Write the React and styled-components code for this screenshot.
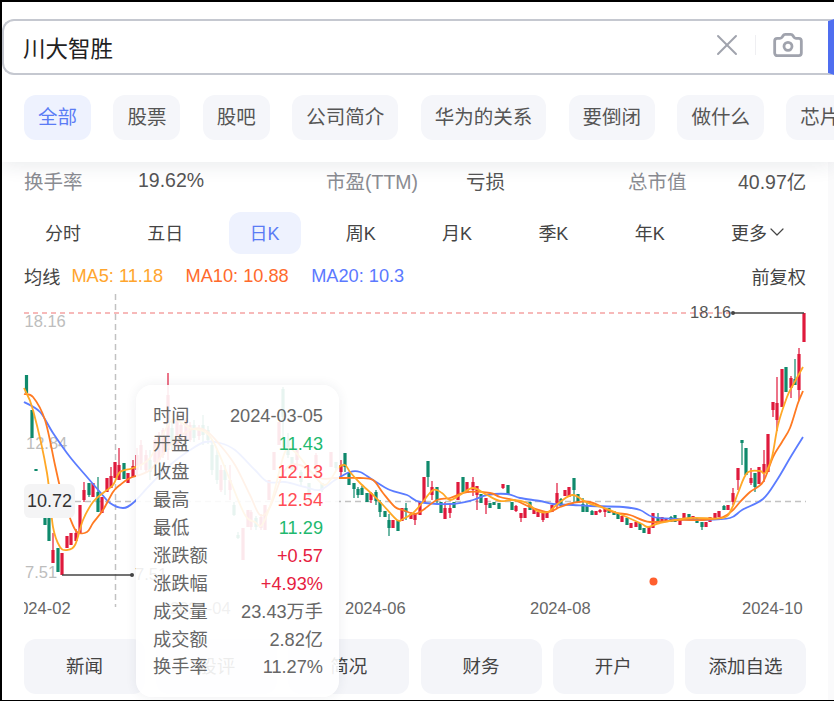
import React from 'react'
import styled, { createGlobalStyle } from 'styled-components'
import { X, Camera, ChevronDown } from 'lucide-react'

const GlobalStyle = createGlobalStyle`
  html, body {
    margin: 0;
    padding: 0;
    background: #fff;
  }
  body {
    font-family: "Liberation Sans", "Noto Sans CJK SC", sans-serif;
  }
  * {
    box-sizing: border-box;
  }
`

const Frame = styled.div`
  position: relative;
  width: 834px;
  height: 701px;
  overflow: hidden;
  background: #fafafb;
  border-top: 2px solid #000;
  border-left: 2px solid #000;
  border-bottom: 1px solid #000;
`

const Main = styled.div`
  width: 826px;
  height: 698px;
  background: #fff;
`

const Header = styled.header`
  position: relative;
  z-index: 2;
  width: 832px;
  height: 160px;
  padding-top: 17px;
  background: #fff;
  box-shadow: 0 4px 18px rgba(30, 40, 70, 0.09);
`

const SearchBar = styled.div`
  display: flex;
  align-items: center;
  width: 832px;
  height: 56px;
  padding-left: 19px;
  background: #fff;
  border: 2px solid #c5c8d0;
  border-right: 6px solid #4f6ef0;
  border-radius: 12px 0 0 12px;
`

const SearchText = styled.span`
  flex: 1;
  font-size: 22.5px;
  color: #222;
`

const SearchTools = styled.div`
  display: flex;
  align-items: center;
  padding-right: 24px;
  padding-bottom: 4px;
  color: #a0a3ad;
`

const Separator = styled.i`
  display: block;
  width: 1px;
  height: 20px;
  margin: 0 16px 0 10px;
  background: #efeff2;
`

const ChipRow = styled.div`
  display: flex;
  gap: 22.4px;
  margin-top: 20px;
  padding-left: 22px;
  overflow: hidden;
`

const Chip = styled.div`
  flex: none;
  height: 45px;
  padding: 0 14px;
  line-height: 45px;
  font-size: 19.5px;
  border-radius: 12px;
  color: ${props => (props.$active ? '#5b7cf5' : '#555')};
  background: ${props => (props.$active ? '#eef2fe' : '#f5f6fa')};
`

const Stats = styled.div`
  display: grid;
  grid-template-columns: 114px 188px 140px 162px 110px 68px;
  align-items: center;
  height: 37px;
  padding-left: 22px;
  font-size: 19.5px;
  white-space: nowrap;
`

const StatLabel = styled.span`
  color: #8a8c92;
`

const StatValue = styled.span`
  color: #555;
`

const Periods = styled.div`
  display: flex;
  justify-content: space-between;
  width: 781px;
  margin: 13px 0 0 22px;
`

const Period = styled.div`
  display: flex;
  align-items: center;
  height: 42px;
  padding: 0 21px 2px;
  font-size: 18px;
  border-radius: 12px;
  color: ${props => (props.$active ? '#5b7cf5' : '#444')};
  background: ${props => (props.$active ? '#eef2fe' : 'transparent')};
`

const MoreArrow = styled(ChevronDown)`
  margin: 0 -5px 0 -2px;
`

const MaRow = styled.div`
  display: flex;
  align-items: center;
  height: 36px;
  margin-top: 4px;
  padding-left: 22px;
  width: 804px;
  font-size: 18.2px;
  color: #444;
  white-space: nowrap;
`

const MaValue = styled.span`
  margin-left: ${props => props.$gap}px;
  color: ${props => props.$color};
`

const MaRight = styled.span`
  margin-left: auto;
`

const ChartWrap = styled.div`
  position: relative;
  height: 345px;
`

const ChartSvg = styled.svg`
  display: block;
  width: 826px;
  height: 345px;
  font-family: "Liberation Sans", "Noto Sans CJK SC", sans-serif;
  font-size: 16.5px;
`

const PriceTag = styled.div`
  position: absolute;
  left: 22px;
  top: 190px;
  width: 51px;
  height: 34px;
  line-height: 34px;
  text-align: center;
  font-size: 18px;
  color: #333;
  background: #f4f4f5;
  border-radius: 6px;
`

const Actions = styled.div`
  display: grid;
  grid-template-columns: repeat(6, 121px);
  gap: 11.2px;
  padding-left: 22px;
`

const Action = styled.div`
  height: 55px;
  line-height: 55px;
  text-align: center;
  font-size: 18.5px;
  color: #444;
  background: #f4f5f9;
  border-radius: 12px;
`

const Tooltip = styled.div`
  position: absolute;
  z-index: 3;
  left: 134px;
  top: 383px;
  width: 203px;
  height: 312px;
  padding: 17px 16px 0 17px;
  background: rgba(255, 255, 255, 0.9);
  border-radius: 16px;
  box-shadow: 0 0 12px rgba(40, 50, 80, 0.08);
`

const TipRow = styled.div`
  display: flex;
  justify-content: space-between;
  height: 27.95px;
  line-height: 28px;
  font-size: 18.2px;
  color: #666;
  white-space: nowrap;
`

const TipValue = styled.span`
  color: ${props => props.$color || '#666'};
`

const RED = '#df1a3c'
const GREEN = '#0f8a6c'

// x, wick top, body top, body bottom, wick bottom, colour
const candles = [
  [26.5, 375, 375, 393, 393, 'g'], [32, 410, 410, 438, 438, 'g'], [36, 469, 469, 471, 471, 'g'],
  [45, 518, 518, 525, 525, 'g'], [49, 518, 518, 541, 541, 'g'], [53, 533, 550, 563, 563, 'r'],
  [58, 548, 548, 572, 572, 'g'], [62, 553, 553, 575, 575, 'r'], [67, 536, 536, 548, 548, 'r'],
  [71, 533, 533, 545, 545, 'r'], [76, 529, 533, 541, 541, 'r'], [80, 505, 505, 533, 533, 'r'],
  [84, 482, 490, 500, 502, 'r'], [89, 483, 483, 495, 497, 'g'], [93, 483, 483, 497, 497, 'r'],
  [98, 477, 492, 512, 512, 'g'], [102, 497, 497, 513, 513, 'r'], [107, 478, 478, 492, 492, 'r'],
  [111, 467, 476, 488, 488, 'r'], [115, 462, 462, 478, 478, 'r'], [119, 448, 465, 480, 480, 'r'],
  [124, 463, 463, 479, 479, 'g'], [128, 473, 473, 483, 483, 'r'], [133, 460, 466, 477, 477, 'r'],
  [137, 448, 455, 470, 475, 'r'], [141, 440, 445, 465, 470, 'r'], [146, 450, 455, 470, 472, 'r'],
  [150, 450, 460, 472, 480, 'g'], [155, 438, 440, 462, 465, 'r'], [159, 432, 435, 460, 462, 'r'],
  [163, 428, 430, 455, 458, 'r'], [168, 373, 395, 450, 460, 'r'], [172, 420, 428, 445, 450, 'g'],
  [177, 415, 420, 445, 448, 'r'], [181, 422, 425, 440, 442, 'r'], [186, 418, 420, 440, 442, 'r'],
  [190, 422, 425, 440, 442, 'r'], [194, 420, 425, 438, 442, 'g'], [199, 425, 428, 436, 440, 'r'],
  [203, 415, 425, 435, 445, 'g'], [208, 426, 430, 440, 444, 'g'], [212, 440, 445, 470, 475, 'g'],
  [217, 450, 455, 480, 484, 'g'], [221, 465, 470, 490, 492, 'r'], [225, 465, 470, 480, 495, 'g'],
  [230, 465, 480, 490, 500, 'r'], [234, 502, 505, 515, 516, 'g'], [238, 532, 535, 538, 539, 'g'],
  [243, 528, 528, 560, 560, 'r'], [248, 510, 510, 527, 527, 'r'], [251, 510, 512, 527, 530, 'r'],
  [256, 516, 518, 527, 530, 'g'], [261, 514, 517, 528, 530, 'r'], [265, 505, 505, 530, 530, 'r'],
  [269, 480, 480, 500, 500, 'r'], [274, 452, 452, 470, 470, 'r'], [279, 422, 422, 445, 445, 'r'],
  [283, 387, 389, 417, 447, 'g'], [288, 433, 440, 455, 458, 'g'], [292, 457, 457, 470, 470, 'g'],
  [297, 448, 450, 460, 470, 'r'], [301, 470, 472, 482, 486, 'g'], [309, 483, 483, 497, 497, 'g'],
  [316, 453, 455, 470, 475, 'r'], [322, 483, 483, 490, 492, 'g'], [331, 452, 452, 467, 467, 'r'],
  [336, 462, 462, 468, 470, 'g'], [341, 460, 465, 472, 476, 'r'], [345, 453, 453, 467, 472, 'g'],
  [349, 473, 473, 485, 485, 'g'], [354, 483, 483, 489, 498, 'g'], [358, 487, 489, 495, 498, 'g'],
  [362, 486, 488, 495, 495, 'g'], [367, 493, 493, 502, 502, 'g'], [371, 492, 493, 500, 503, 'r'],
  [376, 490, 492, 501, 505, 'g'], [380, 500, 502, 512, 517, 'g'], [385, 511, 511, 517, 517, 'g'],
  [389, 514, 520, 528, 536, 'g'], [393, 520, 520, 528, 528, 'r'], [398, 520, 520, 531, 531, 'g'],
  [402, 508, 508, 521, 521, 'r'], [406, 503, 508, 512, 520, 'g'], [411, 512, 514, 519, 519, 'r'],
  [415, 513, 513, 520, 525, 'r'], [420, 502, 502, 515, 515, 'r'], [424, 477, 477, 503, 503, 'r'],
  [428, 461, 461, 477, 487, 'g'], [432, 481, 487, 495, 500, 'r'], [437, 487, 487, 500, 503, 'g'],
  [441, 502, 502, 513, 513, 'g'], [445, 502, 508, 519, 519, 'r'], [450, 503, 508, 513, 518, 'r'],
  [454, 502, 502, 508, 508, 'g'], [458, 482, 482, 500, 500, 'r'], [463, 477, 477, 492, 492, 'g'],
  [467, 482, 482, 493, 493, 'r'], [473, 477, 482, 490, 496, 'r'], [477, 486, 486, 495, 510, 'r'],
  [481, 494, 494, 503, 503, 'g'], [486, 498, 498, 505, 514, 'r'], [490, 503, 503, 508, 508, 'g'],
  [494, 502, 502, 505, 505, 'g'], [499, 503, 503, 509, 509, 'g'], [503, 484, 484, 488, 489, 'r'],
  [508, 485, 485, 494, 494, 'g'], [512, 502, 502, 510, 510, 'g'], [516, 505, 506, 511, 512, 'r'],
  [521, 513, 513, 518, 522, 'r'], [525, 508, 508, 518, 518, 'r'], [530, 502, 502, 510, 510, 'g'],
  [534, 508, 508, 514, 514, 'r'], [538, 512, 512, 517, 517, 'r'], [543, 513, 513, 520, 522, 'r'],
  [547, 513, 513, 518, 518, 'r'], [552, 505, 505, 512, 512, 'r'], [557, 483, 493, 505, 509, 'r'],
  [561, 498, 499, 506, 507, 'g'], [565, 490, 490, 496, 496, 'r'], [569, 487, 487, 497, 497, 'r'],
  [574, 478, 478, 490, 502, 'g'], [578, 494, 494, 503, 503, 'g'], [583, 498, 504, 512, 512, 'g'],
  [587, 503, 506, 512, 512, 'g'], [592, 510, 511, 515, 515, 'g'], [596, 511, 511, 515, 515, 'r'],
  [600, 509, 510, 512, 513, 'r'], [605, 508, 508, 512, 517, 'r'], [609, 508, 508, 513, 513, 'g'],
  [614, 511, 511, 515, 515, 'g'], [618, 513, 513, 519, 519, 'g'], [622, 516, 516, 522, 522, 'r'],
  [627, 518, 518, 525, 525, 'g'], [631, 523, 523, 528, 528, 'r'], [636, 522, 522, 527, 527, 'r'],
  [640, 523, 523, 530, 530, 'g'], [644, 528, 528, 533, 533, 'g'], [649, 527, 527, 534, 534, 'r'],
  [653, 513, 513, 528, 528, 'r'], [658, 513, 517, 522, 522, 'g'], [662, 517, 517, 521, 521, 'r'],
  [666, 518, 518, 522, 522, 'r'], [671, 516, 517, 522, 522, 'g'], [675, 515, 515, 522, 522, 'g'],
  [680, 520, 520, 525, 525, 'r'], [684, 513, 513, 518, 518, 'r'], [689, 514, 514, 518, 518, 'g'],
  [693, 516, 516, 521, 521, 'r'], [697, 518, 518, 523, 523, 'g'], [702, 522, 522, 527, 530, 'g'],
  [706, 522, 522, 527, 527, 'r'], [710, 517, 517, 522, 522, 'r'], [715, 513, 513, 519, 519, 'r'],
  [719, 511, 511, 517, 517, 'r'], [724, 505, 506, 510, 510, 'g'], [728, 505, 505, 510, 510, 'r'],
  [733, 488, 493, 502, 505, 'r'], [738, 468, 468, 480, 490, 'r'], [742, 440, 440, 443, 465, 'g'],
  [746, 448, 448, 475, 475, 'g'], [751, 468, 478, 483, 485, 'r'], [755, 473, 473, 487, 492, 'g'],
  [759, 467, 467, 484, 484, 'r'], [764, 450, 464, 473, 482, 'r'], [768, 434, 434, 472, 472, 'r'],
  [773, 402, 402, 410, 417, 'r'], [777, 377, 403, 420, 431, 'r'], [782, 369, 369, 407, 407, 'r'],
  [786, 367, 367, 392, 392, 'g'], [791, 376, 378, 388, 398, 'r'], [795, 359, 379, 385, 385, 'g'],
  [799, 348, 354, 390, 400, 'r'], [804, 313, 313, 342, 342, 'r'],
]

const ma5 = [
  [24, 388], [33, 410], [47, 473], [53, 527], [60, 547], [67, 550], [75, 545], [83, 520], [93, 502],
  [103, 493], [113, 485], [120, 472], [133, 468], [150, 458], [170, 422], [180, 422], [190, 428],
  [205, 432], [215, 445], [230, 480], [245, 515], [255, 522], [262, 525], [272, 500], [285, 452],
  [295, 452], [310, 470], [325, 485], [338, 468], [345, 465], [350, 472], [360, 483], [373, 495],
  [383, 505], [397, 520], [403, 519], [413, 513], [422, 503], [433, 490], [442, 493], [450, 500],
  [460, 495], [473, 488], [487, 495], [500, 501], [513, 500], [527, 503], [537, 511], [548, 512],
  [560, 502], [573, 495], [588, 503], [610, 510], [640, 523], [648, 527], [660, 523], [690, 518],
  [723, 518], [732, 508], [738, 493], [747, 473], [760, 471], [765, 473], [772, 457], [778, 425],
  [787, 397], [793, 385], [803, 367],
]

const ma10 = [
  [24, 394], [33, 397], [45, 420], [55, 465], [62, 495], [70, 518], [77, 532], [87, 532], [93, 523],
  [103, 510], [113, 492], [120, 485], [130, 478], [150, 470], [170, 445], [190, 430], [205, 430],
  [220, 445], [235, 465], [250, 495], [260, 515], [270, 507], [285, 470], [300, 465], [320, 478],
  [335, 478], [345, 478], [360, 478], [373, 480], [383, 493], [395, 507], [403, 510], [415, 514],
  [423, 510], [437, 500], [450, 498], [467, 492], [490, 493], [500, 497], [517, 501], [530, 507],
  [548, 512], [560, 507], [573, 503], [590, 502], [613, 512], [630, 515], [650, 522], [680, 520],
  [703, 520], [723, 517], [733, 510], [740, 502], [750, 492], [763, 482], [773, 457], [782, 442],
  [790, 428], [798, 403], [803, 391],
]

const ma20 = [
  [24, 402], [40, 412], [53, 433], [70, 457], [87, 477], [100, 492], [110, 503], [123, 508], [133, 503],
  [150, 485], [170, 465], [190, 450], [205, 442], [220, 443], [235, 450], [255, 470], [268, 482],
  [285, 482], [305, 487], [320, 490], [335, 480], [350, 472], [360, 472], [373, 480], [390, 490],
  [407, 495], [420, 502], [450, 504], [473, 500], [487, 495], [507, 494], [520, 498], [540, 501],
  [553, 504], [573, 505], [590, 506], [623, 507], [640, 510], [653, 517], [677, 519], [703, 520],
  [730, 518], [742, 510], [763, 499], [777, 480], [790, 458], [803, 437],
]

// catmull-rom through the points
const smooth = pts => {
  let d = `M${pts[0][0]} ${pts[0][1]}`
  for (let i = 0; i < pts.length - 1; i++) {
    const p0 = pts[i - 1] || pts[i]
    const p1 = pts[i]
    const p2 = pts[i + 1]
    const p3 = pts[i + 2] || p2
    const c1x = p1[0] + (p2[0] - p0[0]) / 6
    const c1y = p1[1] + (p2[1] - p0[1]) / 6
    const c2x = p2[0] - (p3[0] - p1[0]) / 6
    const c2y = p2[1] - (p3[1] - p1[1]) / 6
    d += ` C${c1x.toFixed(1)} ${c1y.toFixed(1)} ${c2x.toFixed(1)} ${c2y.toFixed(1)} ${p2[0]} ${p2[1]}`
  }
  return d
}

const Chart = () => (
  <ChartSvg viewBox="2 294 826 345">
    <defs>
      <clipPath id="plot">
        <rect x="24" y="294" width="790" height="345" />
      </clipPath>
    </defs>
    <line x1="24" y1="313" x2="733" y2="313" stroke="#f5a3a3" strokeWidth="1.4" strokeDasharray="5 4" />
    <line x1="75" y1="501.5" x2="806" y2="501.5" stroke="#c2c2c2" strokeWidth="1.5" strokeDasharray="6 4" />
    <line x1="115.5" y1="294" x2="115.5" y2="607" stroke="#c2c2c2" strokeWidth="1.5" strokeDasharray="6 4" />
    <text x="24.5" y="327" fill="#bdbdbd">18.16</text>
    <text x="26" y="449" fill="#bdbdbd">12.84</text>
    <text x="25" y="578" fill="#bdbdbd">7.51</text>
    {candles.map(([x, wt, bt, bb, wb, c]) => (
      <g key={x} fill={c === 'r' ? RED : GREEN}>
        <rect x={x - 0.6} y={wt} width="1.2" height={wb - wt} />
        <rect x={x - 1.6} y={bt} width="3.2" height={Math.max(bb - bt, 1.5)} />
      </g>
    ))}
    <path d={smooth(ma20)} fill="none" stroke="#5b7cff" strokeWidth="1.8" />
    <path d={smooth(ma10)} fill="none" stroke="#ff7a22" strokeWidth="1.8" />
    <path d={smooth(ma5)} fill="none" stroke="#ffa826" strokeWidth="1.8" />
    <line x1="733" y1="313" x2="804" y2="313" stroke="#444" strokeWidth="1.3" />
    <circle cx="733" cy="313" r="2" fill="#444" />
    <text x="690" y="318" fill="#555">18.16</text>
    <line x1="62" y1="575" x2="132" y2="575" stroke="#444" strokeWidth="1.3" />
    <circle cx="132" cy="575" r="2" fill="#444" />
    <text x="135" y="580" fill="#555">7.51</text>
    <circle cx="653.5" cy="581.5" r="4" fill="#ff5f2e" />
    <g fill="#666" clipPath="url(#plot)">
      <text x="10" y="614">2024-02</text>
      <text x="170" y="614">2024-04</text>
      <text x="345" y="614">2024-06</text>
      <text x="530" y="614">2024-08</text>
      <text x="742" y="614">2024-10</text>
    </g>
  </ChartSvg>
)

const chips = ['全部', '股票', '股吧', '公司简介', '华为的关系', '要倒闭', '做什么', '芯片']
const periods = ['分时', '五日', '日K', '周K', '月K', '季K', '年K']
const actions = ['新闻', '股评', '简况', '财务', '开户', '添加自选']

const tipRows = [
  ['时间', '2024-03-05'],
  ['开盘', '11.43', '#1fb96f'],
  ['收盘', '12.13', '#ff4d55'],
  ['最高', '12.54', '#ff4d55'],
  ['最低', '11.29', '#1fb96f'],
  ['涨跌额', '+0.57', '#e6213f'],
  ['涨跌幅', '+4.93%', '#e6213f'],
  ['成交量', '23.43万手'],
  ['成交额', '2.82亿'],
  ['换手率', '11.27%'],
]

export default function App() {
  return (
    <Frame>
      <GlobalStyle />
      <Main>
        <Header>
          <SearchBar>
            <SearchText>川大智胜</SearchText>
            <SearchTools>
              <X size={36} strokeWidth={1.3} />
              <Separator />
              <Camera size={32} strokeWidth={2.1} />
            </SearchTools>
          </SearchBar>
          <ChipRow>
            {chips.map((c, i) => (
              <Chip key={c} $active={i === 0}>{c}</Chip>
            ))}
          </ChipRow>
        </Header>
        <Stats>
          <StatLabel>换手率</StatLabel>
          <StatValue>19.62%</StatValue>
          <StatLabel>市盈(TTM)</StatLabel>
          <StatValue>亏损</StatValue>
          <StatLabel>总市值</StatLabel>
          <StatValue>40.97亿</StatValue>
        </Stats>
        <Periods>
          {periods.map(p => (
            <Period key={p} $active={p === '日K'}>{p}</Period>
          ))}
          <Period>更多<MoreArrow size={24} strokeWidth={1.2} /></Period>
        </Periods>
        <MaRow>
          均线
          <MaValue $gap={11} $color="#ffa52e">MA5: 11.18</MaValue>
          <MaValue $gap={22.5} $color="#ff6a2c">MA10: 10.88</MaValue>
          <MaValue $gap={22.5} $color="#5b79ff">MA20: 10.3</MaValue>
          <MaRight>前复权</MaRight>
        </MaRow>
        <ChartWrap>
          <Chart />
          <PriceTag>10.72</PriceTag>
        </ChartWrap>
        <Actions>
          {actions.map(a => (
            <Action key={a}>{a}</Action>
          ))}
        </Actions>
      </Main>
      <Tooltip>
        {tipRows.map(([label, value, color]) => (
          <TipRow key={label}>
            <span>{label}</span>
            <TipValue $color={color}>{value}</TipValue>
          </TipRow>
        ))}
      </Tooltip>
    </Frame>
  )
}
